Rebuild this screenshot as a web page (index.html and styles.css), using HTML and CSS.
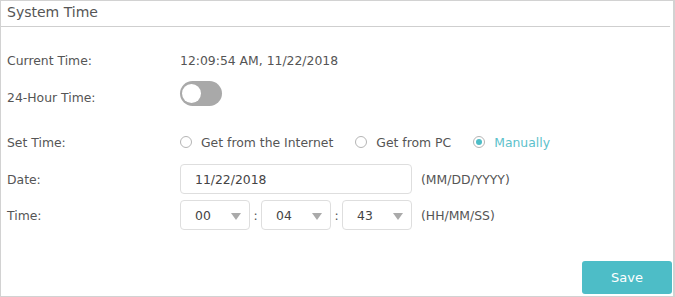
FILE: index.html
```html
<!DOCTYPE html>
<html lang="en">
<head>
  <meta charset="UTF-8" />
  <title>System Time</title>
  <link rel="stylesheet" href="styles.css">
</head>
<body>
  <div class="panel">
    <header class="panel-title">System Time</header>
    <div class="form">
      <div class="row row-current">
        <span class="label">Current Time:</span>
        <span class="value">12:09:54 AM, 11/22/2018</span>
      </div>
      <div class="row row-hour">
        <span class="label">24-Hour Time:</span>
        <span class="toggle"><span class="knob"></span></span>
      </div>
      <div class="row row-set">
        <span class="label">Set Time:</span>
        <label class="radio"><span class="dot"></span>Get from the Internet</label>
        <label class="radio"><span class="dot"></span>Get from PC</label>
        <label class="radio checked"><span class="dot"></span>Manually</label>
      </div>
      <div class="row row-date">
        <span class="label">Date:</span>
        <span class="input date-input">11/22/2018</span>
        <span class="hint">(MM/DD/YYYY)</span>
      </div>
      <div class="row row-time">
        <span class="label">Time:</span>
        <span class="input select">00<span class="arrow"></span></span>
        <span class="colon">:</span>
        <span class="input select">04<span class="arrow"></span></span>
        <span class="colon">:</span>
        <span class="input select">43<span class="arrow"></span></span>
        <span class="hint">(HH/MM/SS)</span>
      </div>
    </div>
    <div class="actions">
      <button class="save-btn">Save</button>
    </div>
  </div>
</body>
</html>
```

FILE: styles.css
```css
body {
  margin: 0;
  padding: 0;
  font-family: 'DejaVu Sans', Verdana, sans-serif;
  font-size: 12.4px;
  color: #555;
  background: #fff;
}
.panel {
  width: 672px;
  height: 295px;
  border: 1px solid #d2d2d2;
  border-right-width: 2px;
  display: flex;
  flex-direction: column;
}
.panel-title {
  height: 26px;
  width: 669px;
  box-sizing: border-box;
  padding: 3px 0 0 6px;
  font-size: 14px;
  border-bottom: 1px solid #cfcfcf;
}
.form {
  display: flex;
  flex-direction: column;
}
.row {
  display: flex;
  align-items: center;
  height: 30px;
  padding-left: 6px;
}
.row-current {
  margin-top: 18px;
}
.row-hour {
  margin-top: 7px;
}
.row-set {
  margin-top: 15px;
}
.row-date {
  margin-top: 7px;
}
.row-time {
  margin-top: 6px;
}
.label {
  width: 173px;
  flex-shrink: 0;
}
.toggle {
  position: relative;
  width: 42px;
  height: 25px;
  border-radius: 13px;
  background: #a9a9a9;
  margin-top: -8px;
}
.toggle .knob {
  position: absolute;
  left: 2px;
  top: 3px;
  width: 19px;
  height: 19px;
  border-radius: 50%;
  background: #fff;
}
.radio {
  display: flex;
  align-items: center;
  margin-right: 22px;
}
.radio .dot {
  width: 10px;
  height: 10px;
  border: 1px solid #b5b5b5;
  border-radius: 50%;
  margin-right: 9px;
  display: flex;
  align-items: center;
  justify-content: center;
}
.radio.checked {
  color: #5cc1cb;
}
.radio.checked .dot::after {
  content: "";
  width: 6px;
  height: 6px;
  border-radius: 50%;
  background: #4dbdc7;
}
.input {
  box-sizing: border-box;
  height: 30px;
  border: 1px solid #dedede;
  border-radius: 4px;
  display: flex;
  align-items: center;
  padding-left: 14px;
  color: #444;
}
.date-input {
  width: 232px;
}
.select {
  width: 70px;
  position: relative;
}
.select .arrow {
  position: absolute;
  right: 8px;
  top: 12px;
  border-left: 5px solid transparent;
  border-right: 5px solid transparent;
  border-top: 7px solid #aaa;
}
.colon {
  width: 11px;
  text-align: center;
}
.hint {
  margin-left: 9px;
}
.actions {
  display: flex;
  justify-content: flex-end;
  margin-top: auto;
  padding: 0 1px 2px 0;
}
.save-btn {
  width: 90px;
  height: 33px;
  border: none;
  border-radius: 3px;
  background: #4dbdc7;
  color: #fff;
  font-family: 'DejaVu Sans', Verdana, sans-serif;
  font-size: 13px;
}
```
